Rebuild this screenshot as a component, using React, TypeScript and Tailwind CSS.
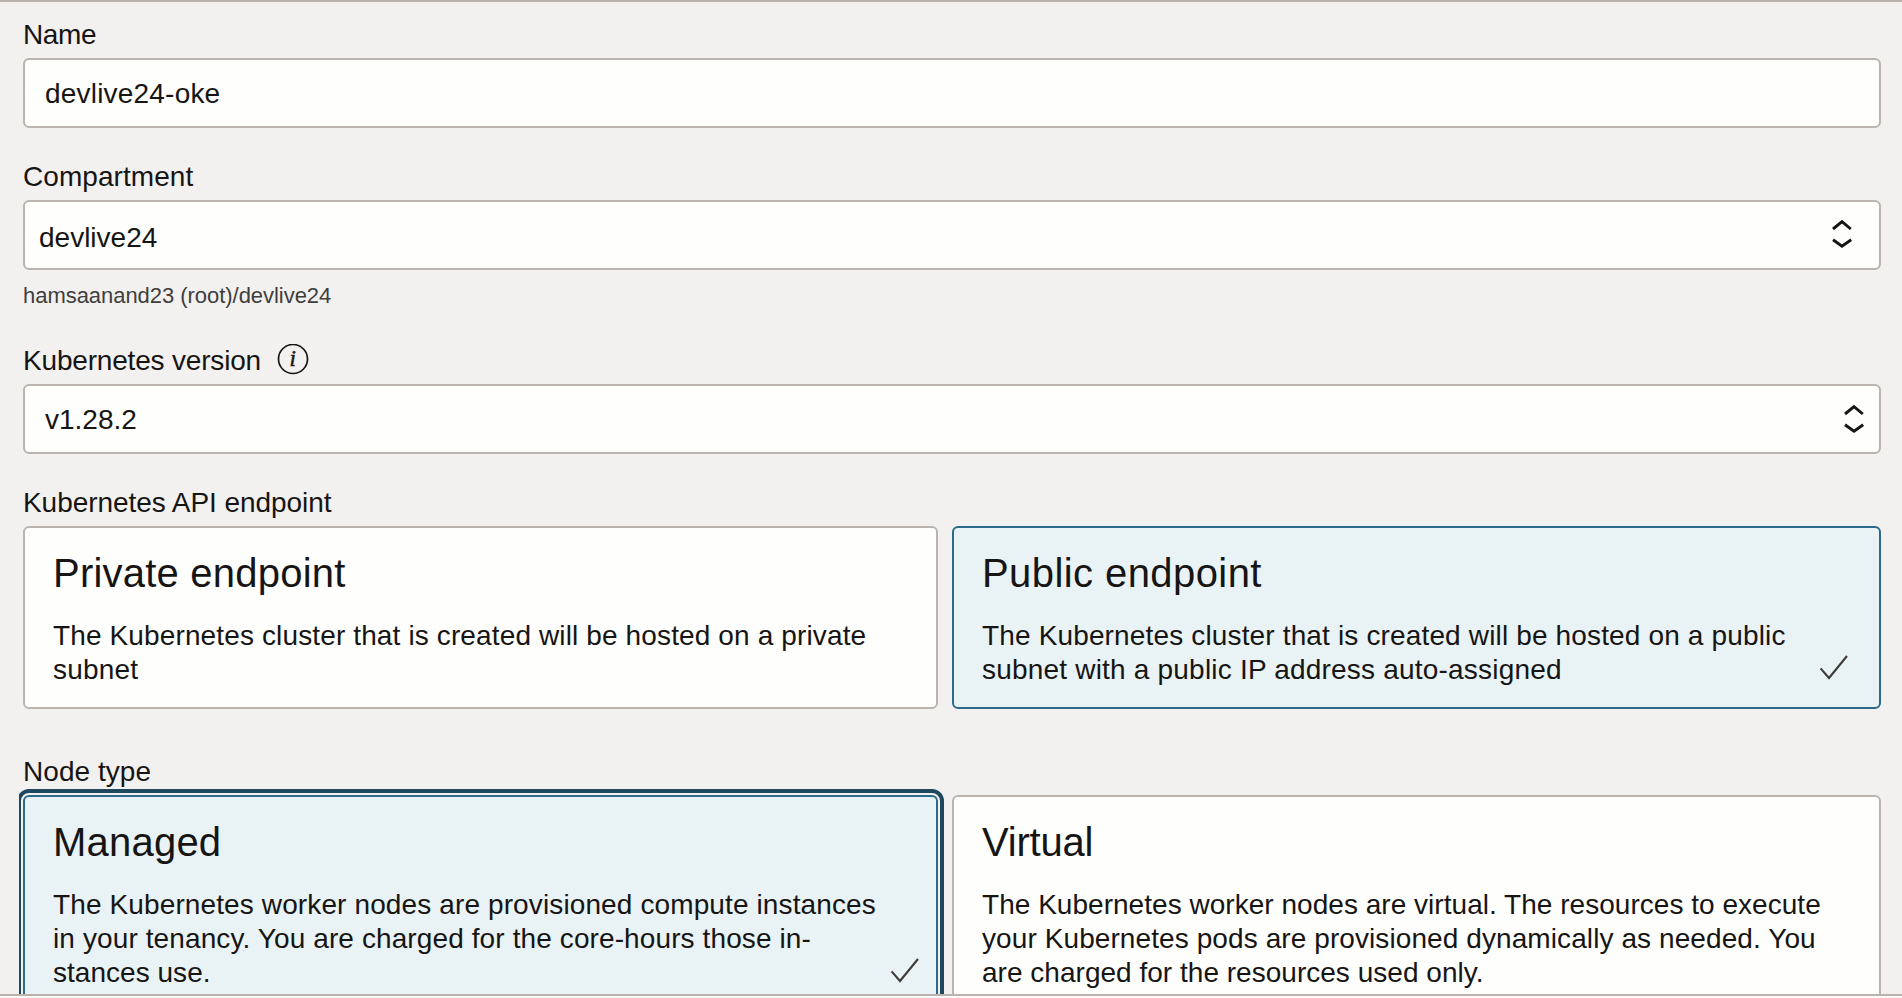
import type { ReactNode } from 'react';

function Chevrons({ className = '' }: { className?: string }) {
  return (
    <svg className={className} width="20" height="30" viewBox="0 0 20 30" fill="none" stroke="#161513" strokeWidth="2.9">
      <path d="M1 10 L10 2.7 L18.8 10" />
      <path d="M1 20.8 L10 27.2 L19.2 20.8" />
    </svg>
  );
}

function Label({ className = '', children }: { className?: string; children: ReactNode }) {
  return <div className={`mb-[6px] flex h-[34px] whitespace-nowrap leading-[34px] ${className}`}>{children}</div>;
}

function Field({ className = '', children }: { className?: string; children: ReactNode }) {
  return (
    <div className={`flex h-[70px] items-center justify-between rounded-[6px] border-2 border-[#bbb4ae] bg-[#fefefc] leading-[34px] ${className}`}>
      {children}
    </div>
  );
}

interface CardProps {
  title: string;
  titleClass: string;
  lines: { text: string; className: string }[];
  selected?: boolean;
  checkClass?: string;
  className: string;
}

function Card({ title, titleClass, lines, selected, checkClass = '', className }: CardProps) {
  return (
    <div
      className={`relative rounded-[6px] border-2 px-[28px] pt-[21px] ${
        selected ? 'border-[#2b6a8b] bg-[#e9f2f5]' : 'border-[#bbb4ae] bg-[#fefefc]'
      } ${className}`}
    >
      <h3 className={`text-[40px] leading-[48px] ${titleClass}`}>{title}</h3>
      <div className="mt-[22px] leading-[34px] whitespace-nowrap">
        {lines.map((line) => (
          <p key={line.text} className={line.className}>
            {line.text}
          </p>
        ))}
      </div>
      {selected && (
        <svg className={`absolute bottom-[26px] ${checkClass}`} width="30" height="28" viewBox="0 0 30 28" fill="none" stroke="#3f3c39" strokeWidth="2.1">
          <path d="M1.6 15.4 L10 25 L28 3" />
        </svg>
      )}
    </div>
  );
}

export default function App() {
  return (
    <div className="h-[998px] w-full overflow-hidden bg-[#fbf9f8] font-['Liberation_Sans',Arial,sans-serif] text-[28px] text-[#161513]">
      <div className="h-[996px] overflow-hidden border-y-2 border-[#bbb4ae] bg-[#f3f1f0] pl-[19px]">
        <div className="h-[992px] overflow-hidden pt-[16px] pr-[21px] pl-[4px]">
          <Label className="tracking-[-0.4px]">Name</Label>
          <Field className="pl-[20px]">
            <span className="pt-[2px] tracking-[0.2px]">devlive24-oke</span>
          </Field>

          <Label className="mt-[32px] tracking-[0.06px]">Compartment</Label>
          <Field className="pr-[27px] pl-[14px]">
            <span className="pt-[6px]">devlive24</span>
            <Chevrons className="mb-[3px]" />
          </Field>
          <div className="mt-[13px] text-[22px] leading-[26px] tracking-[-0.04px] text-[#403e3c]">hamsaanand23 (root)/devlive24</div>

          <Label className="mt-[35px]">
            <span className="tracking-[-0.18px]">Kubernetes version</span>
            <svg className="ml-[16px]" width="32" height="34" viewBox="0 0 32 34">
              <circle cx="16" cy="15" r="14.5" fill="none" stroke="#161513" strokeWidth="1.7" />
              <text
                x="12.6"
                y="21.6"
                fill="#161513"
                stroke="#161513"
                strokeWidth="0.5"
                className="font-['Liberation_Serif',serif] text-[23px] tracking-normal italic"
              >
                i
              </text>
            </svg>
          </Label>
          <Field className="pr-[15px] pl-[20px]">
            <span className="pt-[2px]">v1.28.2</span>
            <Chevrons className="mb-[1px]" />
          </Field>

          <Label className="mt-[32px] tracking-[-0.06px]">Kubernetes API endpoint</Label>
          <div className="grid grid-cols-[915px_929px] gap-[14px]">
            <Card
              className="h-[183px]"
              title="Private endpoint"
              titleClass="tracking-[0.22px]"
              lines={[
                { text: 'The Kubernetes cluster that is created will be hosted on a private', className: 'tracking-[0.13px]' },
                { text: 'subnet', className: 'tracking-[0.2px]' },
              ]}
            />
            <Card
              className="h-[183px]"
              selected
              checkClass="right-[30px]"
              title="Public endpoint"
              titleClass="tracking-[0.42px]"
              lines={[
                { text: 'The Kubernetes cluster that is created will be hosted on a public', className: 'tracking-[0.15px]' },
                { text: 'subnet with a public IP address auto-assigned', className: 'tracking-[0.2px]' },
              ]}
            />
          </div>

          <Label className="mt-[46px] tracking-[0.05px]">Node type</Label>
          <div className="grid grid-cols-[915px_929px] gap-[14px]">
            <Card
              className="h-[217px] outline-4 outline-offset-2 outline-[#1f475e]"
              selected
              checkClass="right-[16px]"
              title="Managed"
              titleClass="tracking-[0.22px]"
              lines={[
                { text: 'The Kubernetes worker nodes are provisioned compute instances', className: 'tracking-[0.12px]' },
                { text: 'in your tenancy. You are charged for the core-hours those in-', className: 'tracking-[0.11px]' },
                { text: 'stances use.', className: 'tracking-[0.03px]' },
              ]}
            />
            <Card
              className="h-[217px]"
              title="Virtual"
              titleClass="tracking-[-0.2px]"
              lines={[
                { text: 'The Kubernetes worker nodes are virtual. The resources to execute', className: 'tracking-[0.03px]' },
                { text: 'your Kubernetes pods are provisioned dynamically as needed. You', className: 'tracking-[0.09px]' },
                { text: 'are charged for the resources used only.', className: 'tracking-[0.02px]' },
              ]}
            />
          </div>
        </div>
      </div>
    </div>
  );
}
